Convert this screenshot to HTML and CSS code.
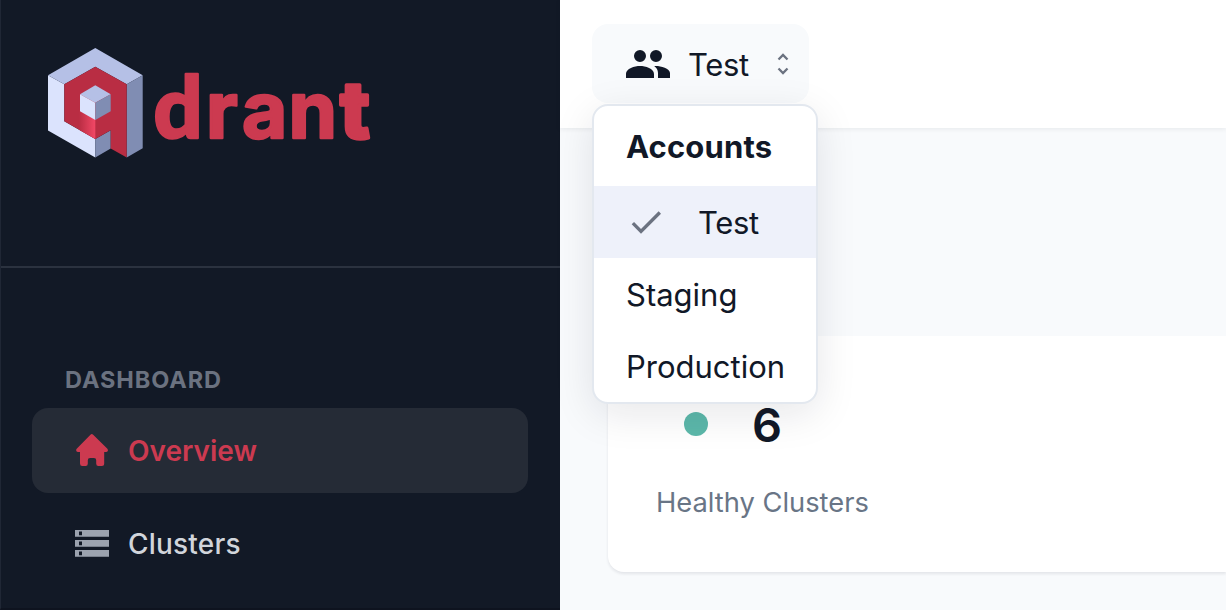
FILE: index.html
```html
<!DOCTYPE html>
<html lang="en">
<head>
<meta charset="utf-8">
<title>Qdrant Cloud</title>
<link rel="stylesheet" href="styles.css">
</head>
<body>
<div class="app">
  <aside class="sidebar">
    <div class="brand">
      <svg class="logo" width="328" height="110" viewBox="48 48 328 110" role="img" aria-label="qdrant">
        <defs>
          <linearGradient id="glow" x1="79" x2="95.3" y1="0" y2="0" gradientUnits="userSpaceOnUse">
            <stop offset="0" stop-color="#b92d43"/><stop offset="1" stop-color="#f24866"/>
          </linearGradient>
        </defs>
        <path fill="#dbe3fd" d="M48 75.3 64.3 84.3V121.3L95.3 139V157.4L48 130.6Z"/>
        <path fill="#b5c0e6" d="M95.3 48 142.7 75.3 126.7 84.3 95.3 66.7 64.3 84.3 48 75.3Z"/>
        <path fill="#808db3" d="M126.7 84.3 142.7 75.3V148.2L126.7 157.4ZM95.3 139 110.7 130.3V148.4L95.3 157.4Z"/>
        <path fill="#b92d43" d="M64.3 84.3 95.3 66.7 126.7 84.3V157.4L110.7 148.4V130.3L95.3 139 64.3 121.3Z"/>
        <path fill="url(#glow)" d="M79 110 95.3 119V139L79 129.7Z"/>
        <path fill="#b5c0e6" d="M95.3 85.3 110.7 94.3 95.3 102.7 80 94.3Z"/>
        <path fill="#dbe3fd" d="M80 94.3 95.3 102.7V120L80 111.3Z"/>
        <path fill="#808db3" d="M110.7 94.3V111.3L95.3 120V102.7Z"/>
        <text class="wordmark" x="153.500 206 242 288.500" y="137.500"><tspan class="wordmark-d">d</tspan>ran<tspan class="wordmark-t" x="340">t</tspan></text>
      </svg>
    </div>
    <nav class="nav">
      <h2 class="nav-title">DASHBOARD</h2>
      <a class="nav-item active">
        <svg class="home" width="34" height="34" viewBox="0 0 34 34"><path fill="currentColor" d="M15.700 1.500q1.100-1 2.200 0L32.400 15.800q.9 1.200.4 2.200-.6.9-1.800.9h-1.800V30.500q0 2.500-2.500 2.500H23.400q-2.200 0-2.200-2.200V27.300q0-2.300-2.300-2.300H15.100q-2.300 0-2.300 2.300V30.800q0 2.200-2.200 2.200H7.300q-2.300 0-2.300-2.500V18.900H3.100q-1.300 0-1.800-.9-.5-1.100.4-2.200Z"/></svg>
        <span>Overview</span>
      </a>
      <a class="nav-item clusters">
        <svg class="servers" width="34" height="34" viewBox="0 0 34 34"><path fill="currentColor" fill-rule="evenodd" d="M0 3H34V9.700H0ZM4 4.500V8.200H7V4.500ZM0 13H34V19.700H0ZM4 14.500V18.200H7V14.500ZM0 23H34V29.700H0ZM4 24.500V28.200H7V24.500Z"/></svg>
        <span>Clusters</span>
      </a>
    </nav>
  </aside>
  <main class="main">
    <header class="topbar">
      <div class="account">
        <button class="account-button">
          <svg class="people" width="48" height="48" viewBox="0 0 24 24"><path fill="currentColor" d="M16.500 11a3 3 0 1 0 0-6 3 3 0 0 0 0 6ZM8.500 11a3 3 0 1 0 0-6 3 3 0 0 0 0 6ZM8.500 13C5.800 13 1.500 14.300 1.500 17V19H15.500V17C15.500 14.300 11.200 13 8.500 13ZM16.500 13C16.200 13 15.900 13 15.600 13.050 16.800 13.900 17.500 15.100 17.500 16.500V19H23.500V16.500C23.500 14.200 18.800 13 16.500 13Z"/></svg>
          <span class="account-name">Test</span>
          <svg class="chevrons" width="12" height="22" viewBox="0 0 12 22"><path fill="none" stroke="currentColor" stroke-width="2.300" d="M1.500 6.500 6 2 10.500 6.500M1.500 15.500 6 20 10.500 15.500"/></svg>
        </button>
        <div class="menu">
          <h3 class="menu-title">Accounts</h3>
          <div class="menu-item selected">
            <svg width="40" height="40" viewBox="0 0 24 24"><path fill="#6b7280" d="M9 16.170 4.830 12 3.410 13.410 9 19 21 7 19.590 5.590Z"/></svg>
            <span class="selected-name">Test</span>
          </div>
          <div class="menu-item">Staging</div>
          <div class="menu-item">Production</div>
        </div>
      </div>
    </header>
    <section class="content">
      <article class="card">
        <div class="stat"><span class="dot"></span><strong class="count">6</strong></div>
        <p class="caption">Healthy Clusters</p>
      </article>
    </section>
  </main>
</div>
</body>
</html>
```
FILE: styles.css
```css
* { box-sizing: border-box; }
body { margin: 0; font-family: Inter, "Liberation Sans", sans-serif; color: #111827; overflow: hidden; }
h2, h3, p { margin: 0; }
svg { display: block; flex: none; }
.app { display: flex; height: 610px; }
.sidebar { width: 560px; flex: none; background: #121926; border-left: 1px solid #202735; border-bottom: 2px solid #0e131f; }
.brand { height: 268px; padding: 48px 0 0 47px; border-bottom: 2px solid #2b323f; }
.wordmark { font: 700 78px Inter, sans-serif; fill: #cc3a50; stroke: #cc3a50; stroke-width: 2.5px; stroke-linejoin: round; }
.wordmark-d { font: 900 86px Lato, sans-serif; }
.wordmark-t { font-weight: 800; stroke-width: 3.5px; }
.nav { padding: 96px 32px 0 31px; }
.nav-title { height: 44px; padding-left: 33px; font-size: 23.5px; line-height: 31px; font-weight: 700; letter-spacing: 0.9px; color: #6b7280; }
.nav-item { display: flex; align-items: center; gap: 19px; height: 85px; margin-bottom: 8px; padding-left: 43px; border-radius: 16px; font-size: 28px; font-weight: 500; color: #d1d5db; }
.nav-item.active { background: #252b36; color: #cc3a50; font-weight: 600; padding-top: 1px; }
.nav-item.clusters { padding-top: 1px; letter-spacing: 0.2px; }
.home { margin-bottom: 2px; }
.servers { color: #9ca3af; margin-bottom: 1px; }
.main { flex: 1; min-width: 0; background: #f8fafc; }
.topbar { position: relative; z-index: 1; height: 128px; padding: 24px 32px; background: #fff; box-shadow: 0 1px 5px rgba(17, 24, 39, .08); }
.account { position: relative; width: 217px; }
.account-button { display: flex; align-items: center; width: 217px; height: 79px; padding: 0 0 0 31px; border: 0; border-radius: 16px; background: #f8fafc; color: #111827; font: 400 31px Inter, sans-serif; letter-spacing: -0.3px; }
.account-name { width: 88px; margin-left: 17px; padding-top: 2px; text-align: left; }
.chevrons { color: #6b7280; margin-left: 1px; }
.menu { position: absolute; top: 80px; left: 0; width: 226px; height: 300px; border: 2px solid #e3e8ef; border-radius: 16px; background: #fff; box-shadow: 0 10px 40px rgba(17, 24, 39, .1); overflow: hidden; font-size: 31px; }
.menu-title { height: 80px; padding-left: 32px; font-size: 31px; line-height: 82px; font-weight: 700; letter-spacing: 0.15px; }
.menu-item { display: flex; align-items: center; height: 72px; padding: 1px 0 0 32px; }
.selected { gap: 32px; padding-top: 0; background: #eef1fa; letter-spacing: -0.3px; }
.selected-name { padding-top: 1px; }
.content { height: 482px; padding: 208px 0 0 48px; }
.card { height: 236px; padding: 58px 48px 0; border-radius: 16px 0 0 16px; background: #fff; box-shadow: 0 2px 3px rgba(17, 24, 39, .09); }
.stat { display: flex; align-items: center; height: 60px; padding-left: 28px; }
.dot { width: 24px; height: 24px; border-radius: 50%; background: #5cb8aa; }
.count { padding-top: 1px; margin-left: 44px; font-size: 47px; font-weight: 600; line-height: 60px; }
.caption { margin-top: 31px; font-size: 27.3px; line-height: 36px; color: #697586; }
```
